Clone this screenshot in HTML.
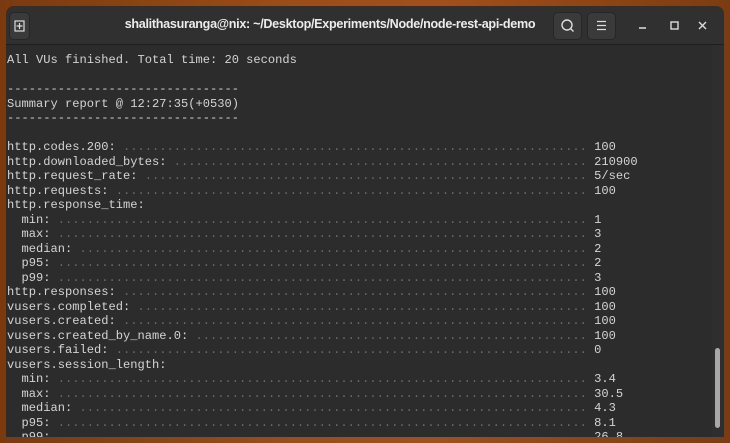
<!DOCTYPE html>
<html><head><meta charset="utf-8"><style>
body{margin:0;width:730px;height:443px;overflow:hidden;background:linear-gradient(90deg,#7a3a10,#9a4e1a 40%,#a0501c 60%,#7c3c12);font-family:"Liberation Sans",sans-serif;position:relative}
.win{position:absolute;left:6px;top:6px;width:718px;height:431px;background:#2c2c2c;border-radius:8px 8px 0 0;overflow:hidden}
.hdr{position:absolute;left:0;top:0;width:718px;height:38px;background:#303030;border-bottom:1px solid #1e1e1e}
.title{position:absolute;left:106px;width:436px;top:11px;text-align:center;color:#ececec;font-weight:bold;font-size:12.6px;letter-spacing:-0.3px;white-space:nowrap}
.btn{position:absolute;top:6px;width:27px;height:26px;background:#3a3a3a;border-radius:5px;border:1px solid #262626}
.term{position:absolute;left:1px;top:47px;font-family:"Liberation Mono",monospace;font-size:12.08px;line-height:14.5px;color:#d4d4d4}
.r{position:relative;height:14.5px;white-space:pre}
.c{display:inline-block;width:80ch;overflow:hidden;vertical-align:top}
.d{color:#6b6b6b}
.v{position:absolute;left:81ch;top:0}
.sb{position:absolute;left:706px;top:39px;width:12px;height:392px;background:#2e2e2e}
.th{position:absolute;left:709px;top:342px;width:5px;height:80px;background:#a8a8a8;border-radius:3px}
</style></head><body>
<div class="win">
<div class="hdr">
<div class="btn" style="left:3px;width:19px"><svg width="19" height="26"><rect x="5" y="8" width="9" height="10" fill="none" stroke="#ddd" stroke-width="1.2"/><path d="M9.5 10v6M6.5 13h6" stroke="#ddd" stroke-width="1.2"/></svg></div>
<div class="title">shalithasuranga@nix: ~/Desktop/Experiments/Node/node-rest-api-demo</div>
<div class="btn" style="left:547px"><svg width="27" height="26"><circle cx="13" cy="12" r="5" fill="none" stroke="#ddd" stroke-width="1.4"/><path d="M16.5 15.5l3 3" stroke="#ddd" stroke-width="1.4"/></svg></div>
<div class="btn" style="left:581px"><svg width="27" height="26"><path d="M9 8.5h9M9 12.5h9M9 16.5h9" stroke="#ddd" stroke-width="1.3"/></svg></div>
<svg style="position:absolute;left:626px;top:12px" width="90" height="16"><path d="M7 10h7" stroke="#ddd" stroke-width="1.5"/><rect x="39" y="4" width="7" height="7" fill="none" stroke="#ddd" stroke-width="1.4"/><path d="M67 4l7 7M74 4l-7 7" stroke="#ddd" stroke-width="1.4"/></svg>
</div>
<div class="sb"></div><div class="th"></div>
<div class="term"><div class="r">All VUs finished. Total time: 20 seconds</div><div class="r"> </div><div class="r">--------------------------------</div><div class="r">Summary report @ 12:27:35(+0530)</div><div class="r">--------------------------------</div><div class="r"> </div><div class="r"><span class="c">http.codes.200: <span class="d">................................................................................</span></span><span class="v">100</span></div><div class="r"><span class="c">http.downloaded_bytes: <span class="d">................................................................................</span></span><span class="v">210900</span></div><div class="r"><span class="c">http.request_rate: <span class="d">................................................................................</span></span><span class="v">5/sec</span></div><div class="r"><span class="c">http.requests: <span class="d">................................................................................</span></span><span class="v">100</span></div><div class="r">http.response_time:</div><div class="r"><span class="c">  min: <span class="d">................................................................................</span></span><span class="v">1</span></div><div class="r"><span class="c">  max: <span class="d">................................................................................</span></span><span class="v">3</span></div><div class="r"><span class="c">  median: <span class="d">................................................................................</span></span><span class="v">2</span></div><div class="r"><span class="c">  p95: <span class="d">................................................................................</span></span><span class="v">2</span></div><div class="r"><span class="c">  p99: <span class="d">................................................................................</span></span><span class="v">3</span></div><div class="r"><span class="c">http.responses: <span class="d">................................................................................</span></span><span class="v">100</span></div><div class="r"><span class="c">vusers.completed: <span class="d">................................................................................</span></span><span class="v">100</span></div><div class="r"><span class="c">vusers.created: <span class="d">................................................................................</span></span><span class="v">100</span></div><div class="r"><span class="c">vusers.created_by_name.0: <span class="d">................................................................................</span></span><span class="v">100</span></div><div class="r"><span class="c">vusers.failed: <span class="d">................................................................................</span></span><span class="v">0</span></div><div class="r">vusers.session_length:</div><div class="r"><span class="c">  min: <span class="d">................................................................................</span></span><span class="v">3.4</span></div><div class="r"><span class="c">  max: <span class="d">................................................................................</span></span><span class="v">30.5</span></div><div class="r"><span class="c">  median: <span class="d">................................................................................</span></span><span class="v">4.3</span></div><div class="r"><span class="c">  p95: <span class="d">................................................................................</span></span><span class="v">8.1</span></div><div class="r"><span class="c">  p99: <span class="d">................................................................................</span></span><span class="v">26.8</span></div></div>
</div>
</body></html>
